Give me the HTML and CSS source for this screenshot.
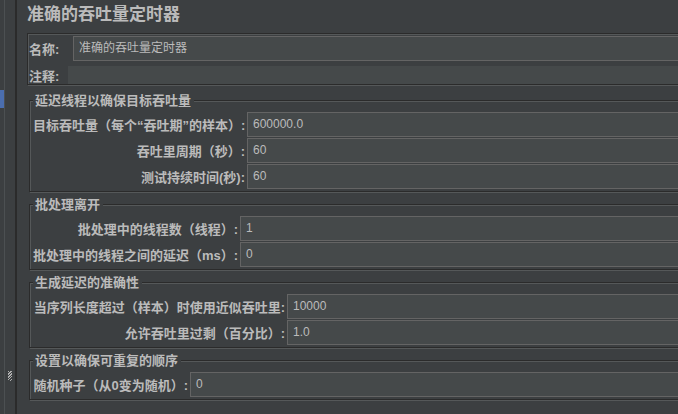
FILE: index.html
```html
<!DOCTYPE html>
<html lang="zh-CN">
<head>
  <meta charset="UTF-8">
  <title>准确的吞吐量定时器</title>
  <link rel="stylesheet" href="styles.css">
</head>
<body>
  <div class="window">
    <div class="tree-edge"><div class="tree-sel"></div></div>
    <div class="splitter"><div class="grip"></div></div>

    <div class="editor">
      <div class="editor-inner">
        <h1 class="title">准确的吞吐量定时器</h1>

        <div class="name-panel">
          <div class="name-row">
            <span class="label">名称:</span>
            <div class="field">准确的吞吐量定时器</div>
          </div>
          <div class="comment-row">
            <span class="label">注释:</span>
            <div class="comment"></div>
          </div>
        </div>

        <fieldset class="group first">
          <legend>延迟线程以确保目标吞吐量</legend>
          <div class="form delay">
            <span class="label">目标吞吐量（每个“吞吐期”的样本）:</span>
            <div class="field">600000.0</div>
            <span class="label">吞吐里周期（秒）:</span>
            <div class="field">60</div>
            <span class="label">测试持续时间(秒):</span>
            <div class="field">60</div>
          </div>
        </fieldset>

        <fieldset class="group">
          <legend>批处理离开</legend>
          <div class="form batch">
            <span class="label">批处理中的线程数（线程）:</span>
            <div class="field">1</div>
            <span class="label">批处理中的线程之间的延迟（ms）:</span>
            <div class="field">0</div>
          </div>
        </fieldset>

        <fieldset class="group">
          <legend>生成延迟的准确性</legend>
          <div class="form accuracy">
            <span class="label">当序列长度超过（样本）时使用近似吞吐里:</span>
            <div class="field">10000</div>
            <span class="label">允许吞吐里过剩（百分比）:</span>
            <div class="field">1.0</div>
          </div>
        </fieldset>

        <fieldset class="group">
          <legend>设置以确保可重复的顺序</legend>
          <div class="form seed">
            <span class="label">随机种子（从0变为随机）:</span>
            <div class="field">0</div>
          </div>
        </fieldset>
      </div>
    </div>
  </div>
</body>
</html>
```

FILE: styles.css
```css
html, body {
  margin: 0;
  height: 100%;
  overflow: hidden;
  background: #3c3f41;
}

body {
  font-family: "Liberation Sans", "Noto Sans CJK SC", sans-serif;
  font-size: 13px;
  color: #bbbbbb;
}

.window {
  display: flex;
  height: 414px;
}

/* left tree edge + splitter */
.tree-edge {
  width: 4px;
  background: #3c3f41;
}

.tree-sel {
  margin-top: 90px;
  height: 18px;
  background: #4b6eaf;
}

.splitter {
  width: 10px;
  border-left: 1px solid #4c5052;
  border-right: 2px solid #2b2b2b;
  display: flex;
  flex-direction: column;
  align-items: center;
}

.grip {
  margin-top: 371px;
  width: 4px;
  height: 10px;
  background: repeating-linear-gradient(135deg, #b0b0b0 0 1px, transparent 1px 2px);
}

/* editor */
.editor {
  flex: 1;
  min-width: 0;
  overflow: hidden;
  padding-left: 10px;
}

.editor-inner {
  width: 1000px;
}

.title {
  margin: 0;
  padding-top: 5px;
  font-size: 17px;
  line-height: 20px;
  font-weight: bold;
  color: #bbbbbb;
}

.label {
  font-weight: bold;
  white-space: nowrap;
}

.field {
  height: 25px;
  box-sizing: border-box;
  border: 1px solid #646464;
  background: #45494a;
  padding-left: 5px;
  line-height: 23px;
  font-size: 12px;
  color: #bbbbbb;
  white-space: nowrap;
}

.name-panel {
  margin-top: 8px;
  border: 1px solid #2b2b2b;
  box-shadow: inset 1px 1px 0 #555859, 1px 1px 0 #555859;
  padding: 2px 0 0 1px;
}

.name-row {
  display: flex;
  align-items: center;
}

.name-row .label {
  width: 44px;
}

.name-row .field {
  flex: 1;
}

.comment-row {
  display: flex;
  align-items: center;
  margin-top: 5px;
  height: 18px;
}

.comment-row .label {
  width: 39px;
}

.comment {
  flex: 1;
  height: 18px;
  background: #45494a;
}

/* titled groups */
.group {
  margin: 4px 0 0 2px;
  padding: 3px 0 2px 3px;
  border: 1px solid #2b2b2b;
  box-shadow: inset 1px 1px 0 #555859, 1px 1px 0 #555859;
  min-width: 0;
}

.group.first {
  margin-top: 7px;
}

.group legend {
  padding: 0 3px 0 2px;
  line-height: 17px;
  font-weight: bold;
  background: #3c3f41;
}

.form {
  display: grid;
  column-gap: 2px;
  row-gap: 1px;
  align-items: center;
}

.form .label {
  text-align: right;
}

.delay { grid-template-columns: 212px 1fr; }
.batch { grid-template-columns: 205px 1fr; }
.accuracy { grid-template-columns: 252px 1fr; }
.seed { grid-template-columns: 155px 1fr; }
```
